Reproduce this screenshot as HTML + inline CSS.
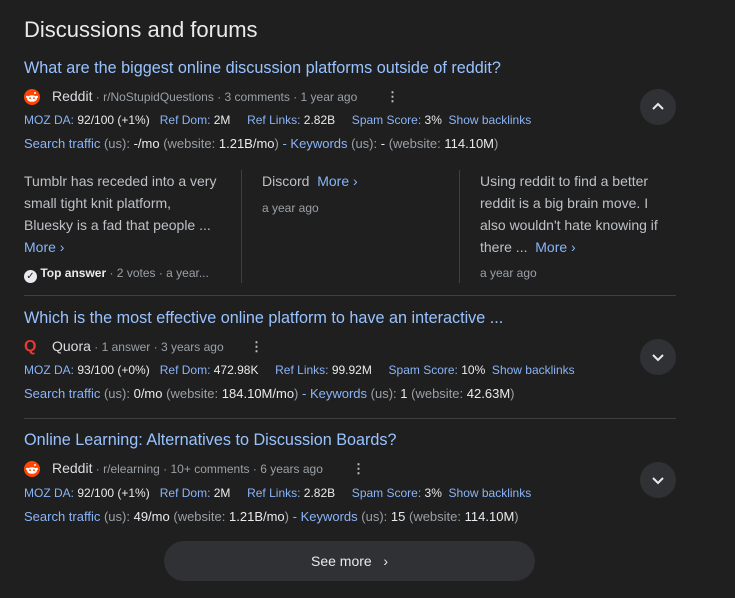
<!DOCTYPE html>
<html><head><style>
body{margin:0;background:#1f1f1f;width:735px;height:598px;overflow:hidden;font-family:"Liberation Sans",Arial,sans-serif;color:#bdc1c6;position:relative}
.a{position:absolute;white-space:nowrap}
h2{position:absolute;left:24px;top:17px;margin:0;font-size:22px;font-weight:400;color:#e8eaed}
.t{font-size:16.2px;color:#99c3ff}
.src{font-size:12px;color:#9aa0a6}
.src b{font-weight:400;color:#dadce0;font-size:14px}
.m{font-size:12px;color:#8ab4f8}
.m span,.s span{color:#e8eaed}
.m i,.s i{font-style:normal;color:#9aa0a6}
.s{font-size:13px;color:#8ab4f8}
.sn{position:absolute;font-size:14px;line-height:22px;color:#bdc1c6}
.mo{color:#8ab4f8}
.g{font-size:12px;color:#9aa0a6}
.vl{position:absolute;width:1px;background:#3c4043;top:170px;height:113px}
.hr{position:absolute;left:24px;width:652px;height:1px;background:#3c4043}
.c{position:absolute;width:36px;height:36px;border-radius:50%;background:#303134;left:640px}
.c svg{position:absolute;left:10px;top:10px}
.ic{position:absolute;width:16px;height:16px}
.dots{position:absolute;color:#bdc1c6;font-weight:bold;font-size:13px}
</style></head><body>
<svg width="0" height="0" style="position:absolute"><defs><g id="r"><circle cx="8" cy="8" r="8" fill="#ff4500"/><ellipse cx="8" cy="9.5" rx="5" ry="3.3" fill="#fff"/><circle cx="6" cy="9.2" r="0.9" fill="#ff4500"/><circle cx="10" cy="9.2" r="0.9" fill="#ff4500"/><circle cx="11" cy="4" r="1" fill="#fff"/><circle cx="3.2" cy="8" r="1.2" fill="#fff"/><circle cx="12.8" cy="8" r="1.2" fill="#fff"/></g></defs></svg>
<h2>Discussions and forums</h2>
<div class="a t" style="left:24px;top:59px">What are the biggest online discussion platforms outside of reddit?</div>
<svg class="ic" style="left:24px;top:89px"><use href="#r"/></svg>
<div class="a src" style="left:52px;top:88px"><b>Reddit</b> · r/NoStupidQuestions · 3 comments · 1 year ago</div>
<div class="dots" style="left:386px;top:89px">⋮</div>
<div class="a m" style="left:24px;top:113px">MOZ DA: <span>92/100 (+1%)</span>&nbsp;&nbsp; Ref Dom: <span>2M</span>&nbsp;&nbsp;&nbsp;&nbsp; Ref Links: <span>2.82B</span>&nbsp;&nbsp;&nbsp;&nbsp; Spam Score: <span>3%</span>&nbsp; Show backlinks</div>
<div class="a s" style="left:24px;top:136px">Search traffic <i>(us):</i> <span>-/mo</span> <i>(website:</i> <span>1.21B/mo</span><i>)</i> - Keywords <i>(us):</i> <span>-</span> <i>(website:</i> <span>114.10M</span><i>)</i></div>
<div class="c" style="top:89px"><svg width="16" height="16"><path d="M3 10l5-5 5 5" stroke="#e8eaed" stroke-width="2" fill="none"/></svg></div>
<div class="sn" style="left:24px;top:170px;width:196px">Tumblr has receded into a very small tight knit platform, Bluesky is a fad that people ...<br><span class="mo">More ›</span></div>
<div class="a g" style="left:24px;top:266px"><span style="display:inline-block;width:13px;height:13px;border-radius:50%;background:#e8eaed;color:#1f1f1f;font-size:10px;text-align:center;line-height:13px;vertical-align:-2px">✓</span> <b style="color:#e8eaed">Top answer</b> · 2 votes · a year...</div>
<div class="vl" style="left:241px"></div>
<div class="sn" style="left:262px;top:170px">Discord &nbsp;<span class="mo">More ›</span></div>
<div class="a g" style="left:262px;top:201px">a year ago</div>
<div class="vl" style="left:459px"></div>
<div class="sn" style="left:480px;top:170px;width:182px">Using reddit to find a better reddit is a big brain move. I also wouldn't hate knowing if there ... &nbsp;<span class="mo">More ›</span></div>
<div class="a g" style="left:480px;top:266px">a year ago</div>
<div class="hr" style="top:295px"></div>
<div class="a t" style="left:24px;top:309px">Which is the most effective online platform to have an interactive ...</div>
<div class="a" style="left:24px;top:338px;color:#e53935;font-weight:bold;font-size:16px">Q</div>
<div class="a src" style="left:52px;top:338px"><b>Quora</b> · 1 answer · 3 years ago</div>
<div class="dots" style="left:250px;top:339px">⋮</div>
<div class="a m" style="left:24px;top:363px">MOZ DA: <span>93/100 (+0%)</span>&nbsp;&nbsp; Ref Dom: <span>472.98K</span>&nbsp;&nbsp;&nbsp;&nbsp; Ref Links: <span>99.92M</span>&nbsp;&nbsp;&nbsp;&nbsp; Spam Score: <span>10%</span>&nbsp; Show backlinks</div>
<div class="a s" style="left:24px;top:386px">Search traffic <i>(us):</i> <span>0/mo</span> <i>(website:</i> <span>184.10M/mo</span><i>)</i> - Keywords <i>(us):</i> <span>1</span> <i>(website:</i> <span>42.63M</span><i>)</i></div>
<div class="c" style="top:339px"><svg width="16" height="16"><path d="M3 6l5 5 5-5" stroke="#e8eaed" stroke-width="2" fill="none"/></svg></div>
<div class="hr" style="top:418px"></div>
<div class="a t" style="left:24px;top:431px">Online Learning: Alternatives to Discussion Boards?</div>
<svg class="ic" style="left:24px;top:461px"><use href="#r"/></svg>
<div class="a src" style="left:52px;top:460px"><b>Reddit</b> · r/elearning · 10+ comments · 6 years ago</div>
<div class="dots" style="left:352px;top:461px">⋮</div>
<div class="a m" style="left:24px;top:486px">MOZ DA: <span>92/100 (+1%)</span>&nbsp;&nbsp; Ref Dom: <span>2M</span>&nbsp;&nbsp;&nbsp;&nbsp; Ref Links: <span>2.82B</span>&nbsp;&nbsp;&nbsp;&nbsp; Spam Score: <span>3%</span>&nbsp; Show backlinks</div>
<div class="a s" style="left:24px;top:509px">Search traffic <i>(us):</i> <span>49/mo</span> <i>(website:</i> <span>1.21B/mo</span><i>)</i> - Keywords <i>(us):</i> <span>15</span> <i>(website:</i> <span>114.10M</span><i>)</i></div>
<div class="c" style="top:462px"><svg width="16" height="16"><path d="M3 6l5 5 5-5" stroke="#e8eaed" stroke-width="2" fill="none"/></svg></div>
<div style="position:absolute;left:164px;top:541px;width:371px;height:40px;border-radius:20px;background:#303134;color:#e8eaed;font-size:14px;text-align:center;line-height:40px">See more &nbsp;&nbsp;›</div>
</body></html>
